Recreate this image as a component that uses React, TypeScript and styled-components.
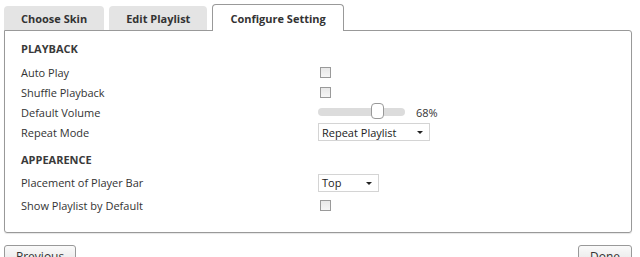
import { useState } from "react";
import styled, { createGlobalStyle } from "styled-components";

const GlobalStyle = createGlobalStyle`
  body {
    margin: 0;
    background: #fff;
    font-family: "Open Sans", "Liberation Sans", sans-serif;
    font-size: 11px;
    color: #333;
  }
`;

const Page = styled.div`
  width: 640px;
  height: 257px;
  overflow: hidden;
  padding: 4px 8px 0 4px;
  box-sizing: border-box;
`;

const TabBar = styled.div`
  display: flex;
  align-items: flex-end;
  gap: 5px;
  height: 26px;
  position: relative;
  z-index: 1;
`;

const Tab = styled.div<{ $active?: boolean }>`
  height: 24px;
  padding: 0 17px;
  display: flex;
  align-items: center;
  font-weight: bold;
  font-size: 11px;
  color: #333;
  border-radius: 4px 4px 0 0;
  box-sizing: border-box;
  background: ${(p) => (p.$active ? "#fff" : "#e4e4e4")};
  border: ${(p) => (p.$active ? "1px solid #999" : "none")};
  border-bottom: none;
  ${(p) => (p.$active ? "margin-bottom: -1px; height: 27px;" : "")}
`;

const Panel = styled.div`
  height: 203px;
  border: 1px solid #999;
  border-radius: 0 3px 3px 3px;
  box-shadow: 0 1px 1px rgba(0, 0, 0, 0.1);
  box-sizing: border-box;
  padding: 10px 0 0 16px;
`;

const Heading = styled.div<{ $top?: number; $below?: number }>`
  font-weight: bold;
  color: #3a3a3a;
  line-height: 16px;
  margin-top: ${(p) => p.$top ?? 0}px;
  margin-bottom: ${(p) => p.$below ?? 0}px;
`;

const Row = styled.div<{ $h: number }>`
  display: grid;
  grid-template-columns: 297px 1fr;
  align-items: center;
  height: ${(p) => p.$h}px;
`;

const Label = styled.span`
  color: #333;
`;

const Control = styled.div`
  display: flex;
  align-items: center;
`;

const Check = styled.input.attrs({ type: "checkbox" })`
  appearance: none;
  margin: 0 0 0 2px;
  width: 11px;
  height: 11px;
  border: 1px solid #9a9a9a;
  background: linear-gradient(#e8e8e8, #f6f6f6);
  box-sizing: border-box;
`;

const Track = styled.div`
  position: relative;
  width: 87px;
  height: 8px;
  border-radius: 4px;
  background: #dcdcdc;
`;

const Thumb = styled.div`
  position: absolute;
  top: -5px;
  width: 13px;
  height: 16px;
  box-sizing: border-box;
  border: 1px solid #999;
  border-radius: 4px;
  background: #fff;
`;

const Percent = styled.span`
  margin-left: 11px;
  color: #333;
`;

const Select = styled.div<{ $w: number }>`
  position: relative;
  width: ${(p) => p.$w}px;
  height: 18px;
  box-sizing: border-box;
  border: 1px solid #d4d4d4;
  padding-left: 3px;
  display: flex;
  align-items: center;
  color: #222;
  background: #fff;
`;

const Caret = styled.span`
  position: absolute;
  right: 6px;
  top: 7px;
  border-left: 3px solid transparent;
  border-right: 3px solid transparent;
  border-top: 3px solid #222;
`;

const Footer = styled.div`
  display: flex;
  justify-content: space-between;
  margin-top: 12px;
`;

const Button = styled.button`
  font-family: "Open Sans", "Liberation Sans", sans-serif;
  font-size: 12px;
  color: #333;
  height: 22px;
  padding: 0 11px;
  border: 1px solid #999;
  border-radius: 3px;
  background: linear-gradient(#fafafa, #e4e4e4);
`;

export default function App() {
  const [volume] = useState(68);
  const thumbLeft = Math.round((87 - 13) * (volume / 100)) + 3;

  return (
    <Page>
      <GlobalStyle />
      <TabBar>
        <Tab>Choose Skin</Tab>
        <Tab>Edit Playlist</Tab>
        <Tab $active>Configure Setting</Tab>
      </TabBar>
      <Panel>
        <Heading $below={5}>PLAYBACK</Heading>
        <Row $h={20}>
          <Label>Auto Play</Label>
          <Control>
            <Check />
          </Control>
        </Row>
        <Row $h={20}>
          <Label>Shuffle Playback</Label>
          <Control>
            <Check />
          </Control>
        </Row>
        <Row $h={20}>
          <Label>Default Volume</Label>
          <Control>
            <Track>
              <Thumb style={{ left: thumbLeft }} />
            </Track>
            <Percent>{volume}%</Percent>
          </Control>
        </Row>
        <Row $h={20}>
          <Label>Repeat Mode</Label>
          <Control>
            <Select $w={112}>
              Repeat Playlist
              <Caret />
            </Select>
          </Control>
        </Row>
        <Heading $top={10} $below={3}>
          APPEARENCE
        </Heading>
        <Row $h={23}>
          <Label>Placement of Player Bar</Label>
          <Control>
            <Select $w={61}>
              Top
              <Caret />
            </Select>
          </Control>
        </Row>
        <Row $h={23}>
          <Label>Show Playlist by Default</Label>
          <Control>
            <Check />
          </Control>
        </Row>
      </Panel>
      <Footer>
        <Button>Previous</Button>
        <Button>Done</Button>
      </Footer>
    </Page>
  );
}
